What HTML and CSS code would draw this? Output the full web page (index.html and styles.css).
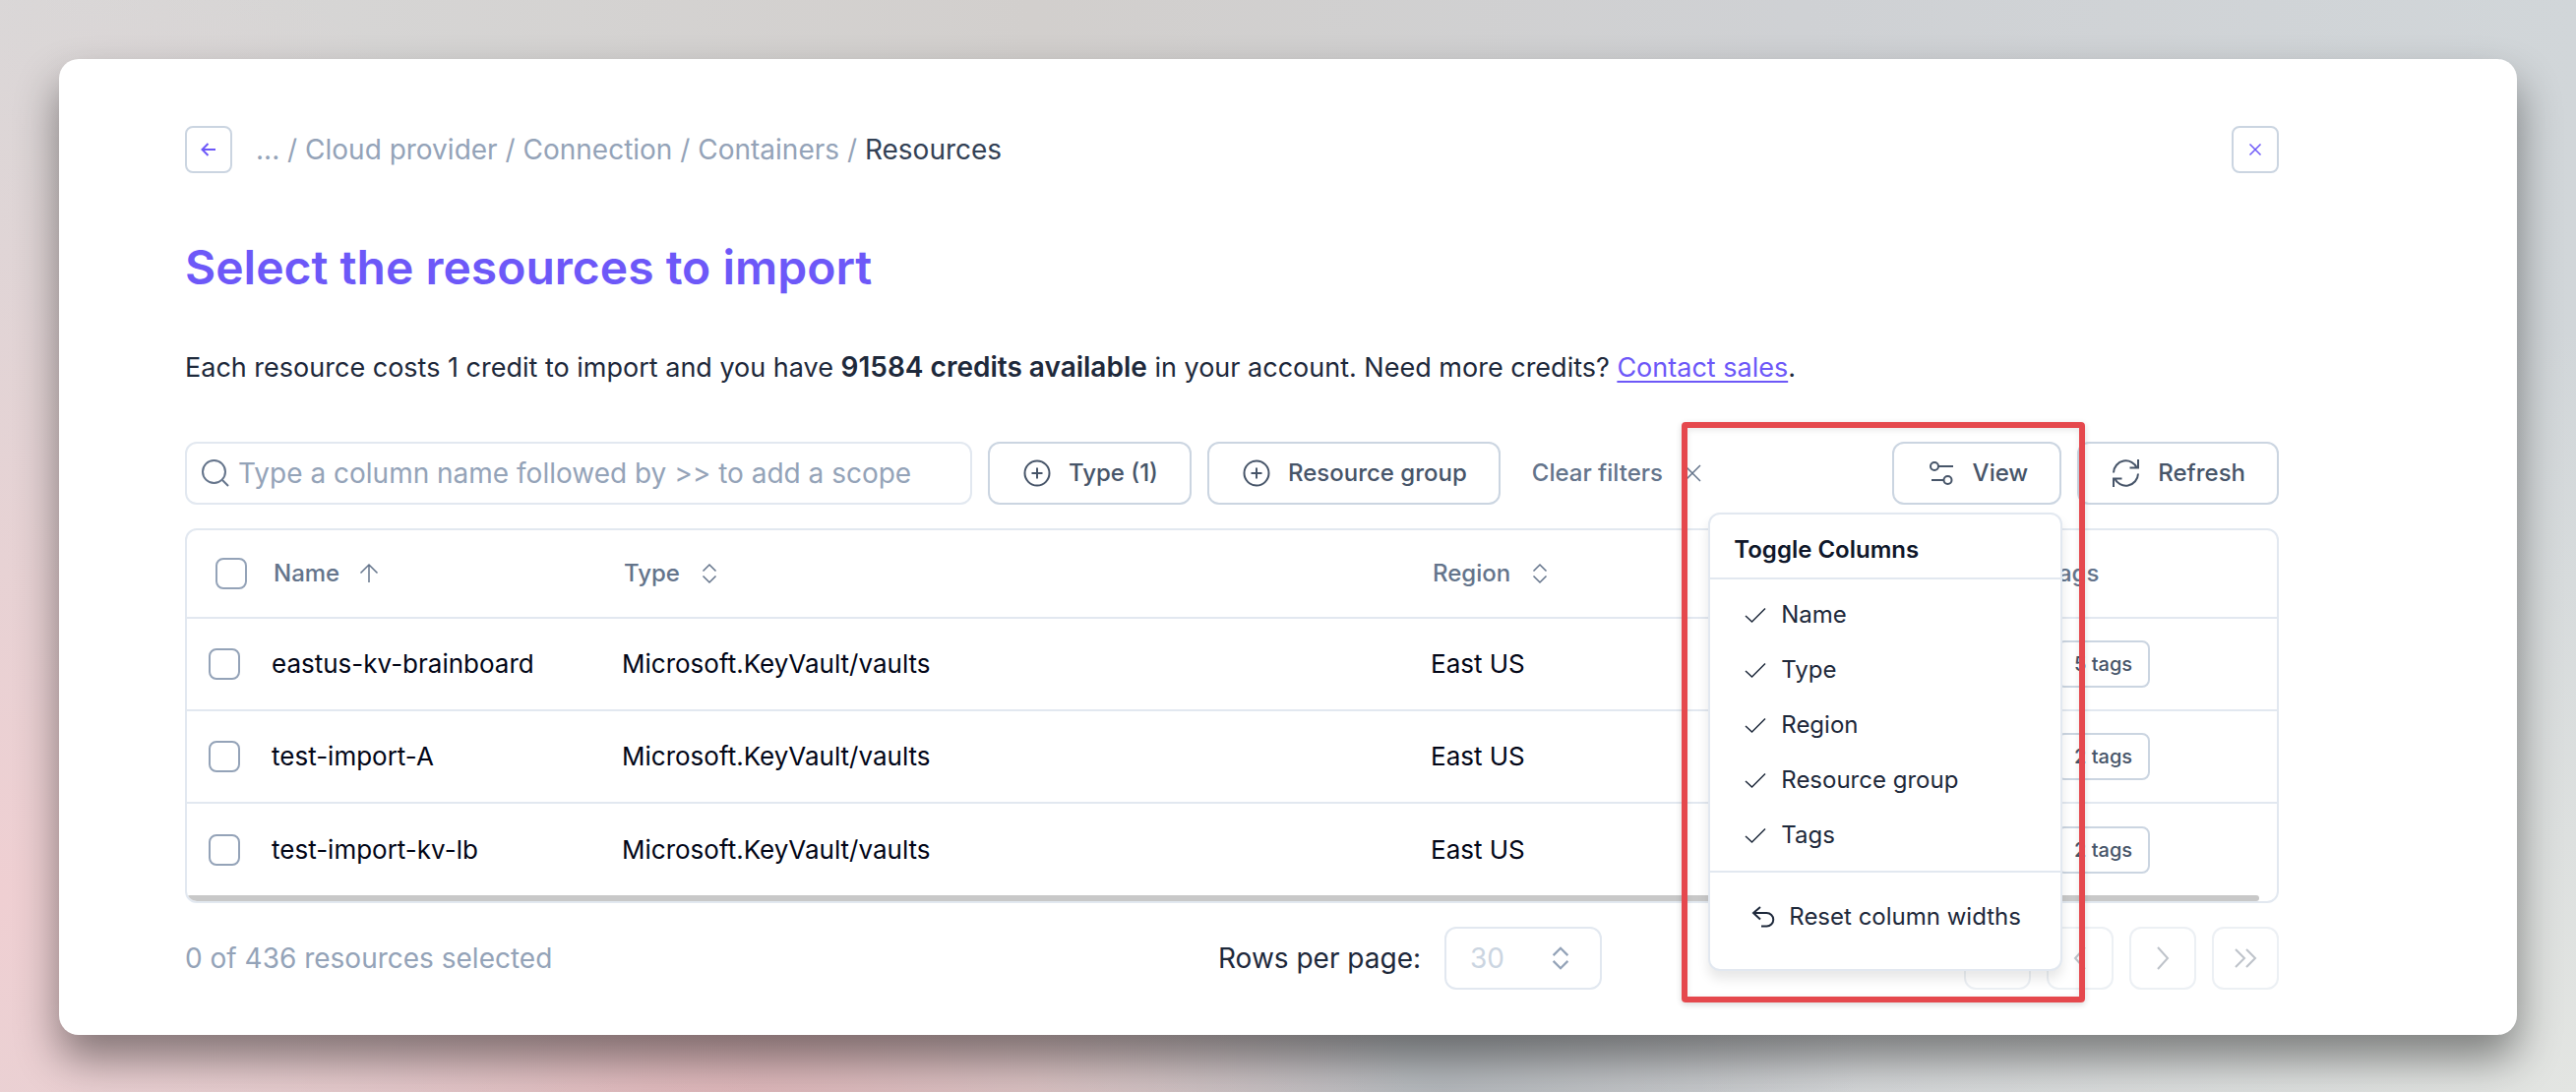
FILE: index.html
```html
<!DOCTYPE html>
<html lang="en">
<head>
<meta charset="utf-8">
<meta name="viewport" content="width=device-width, initial-scale=1">
<title>Select the resources to import</title>
<link rel="stylesheet" href="styles.css">
</head>
<body>
<svg class="sprite" aria-hidden="true">
  <symbol id="i-sort" viewBox="0 0 30 30"><path d="M8.500 12.500 15 6l6.500 6.500M8.500 17.500 15 24l6.500-6.500"/></symbol>
  <symbol id="i-plus-circle" viewBox="0 0 30 30"><circle cx="16" cy="15" r="12.500"/><path d="M16 9.500v11M10.500 15h11"/></symbol>
  <symbol id="i-check" viewBox="0 0 24 24"><path d="m2 13 6.500 6L22 5.500"/></symbol>
</svg>
<main class="panel">
  <header class="topbar">
    <button class="icon-button" type="button" aria-label="Back"><svg class="icon-xs" viewBox="0 0 20 20"><path d="M17 10H4M9.500 4 3.500 10l6 6"/></svg></button>
    <nav class="breadcrumb" aria-label="Breadcrumb">
      <a href="#">...</a> / <a href="#">Cloud provider</a> / <a href="#">Connection</a> / <a href="#">Containers</a> / <span class="current">Resources</span>
    </nav>
    <button class="icon-button" type="button" aria-label="Close"><svg class="icon-xs thin" viewBox="0 0 20 20"><path d="m4.500 4.500 11 11M15.500 4.500l-11 11"/></svg></button>
  </header>
  <h1 class="title">Select the resources to import</h1>
  <p class="intro">Each resource costs 1 credit to import and you have <strong>91584 credits available</strong> in your account. Need more credits? <a href="#">Contact sales</a>.</p>

  <div class="toolbar">
    <label class="search">
      <svg class="icon-md" viewBox="0 0 30 30"><circle cx="13.500" cy="13.500" r="11.500"/><path d="m22 22 6 6"/></svg>
      <input type="text" aria-label="Search resources" placeholder="Type a column name followed by &gt;&gt; to add a scope">
    </label>
    <button class="button" type="button"><svg class="icon-md"><use href="#i-plus-circle"/></svg>Type (1)</button>
    <button class="button" type="button"><svg class="icon-md"><use href="#i-plus-circle"/></svg>Resource group</button>
    <button class="button ghost" type="button">Clear filters<svg class="icon-sm thin" viewBox="0 0 24 24"><path d="m4 4 16 16M20 4 4 20"/></svg></button>
    <div class="view">
      <button class="button" type="button" aria-expanded="true"><svg class="icon-md" viewBox="0 0 30 30"><circle cx="9" cy="8" r="4"/><path d="M13 8h15M6 22h12.500"/><circle cx="22.500" cy="22" r="4"/></svg>View</button>
      <div class="highlight"></div>
      <div class="menu" role="menu">
        <h2 class="menu-title">Toggle Columns</h2>
        <div class="menu-items">
          <button type="button" role="menuitemcheckbox" aria-checked="true"><svg class="icon-sm thin"><use href="#i-check"/></svg>Name</button>
          <button type="button" role="menuitemcheckbox" aria-checked="true"><svg class="icon-sm thin"><use href="#i-check"/></svg>Type</button>
          <button type="button" role="menuitemcheckbox" aria-checked="true"><svg class="icon-sm thin"><use href="#i-check"/></svg>Region</button>
          <button type="button" role="menuitemcheckbox" aria-checked="true"><svg class="icon-sm thin"><use href="#i-check"/></svg>Resource group</button>
          <button type="button" role="menuitemcheckbox" aria-checked="true"><svg class="icon-sm thin"><use href="#i-check"/></svg>Tags</button>
        </div>
        <div class="menu-footer">
          <button type="button" role="menuitem"><svg class="icon-sm" viewBox="0 0 24 24"><path d="M9 2 2 8l7 6.500M2 8h13.500a6.500 6.500 0 0 1 0 13.500H10"/></svg>Reset column widths</button>
        </div>
      </div>
    </div>
    <button class="button" type="button"><svg class="icon-md" viewBox="0 0 30 30"><path d="M3 14.500A12.500 12.500 0 0 1 27 10M28 1v8.500h-8.500M28 15.500A12.500 12.500 0 0 1 4 20M3 29v-8.500h8.500"/></svg>Refresh</button>
  </div>

  <div class="table-box">
    <table class="resources">
      <colgroup><col class="c-check"><col class="c-name"><col class="c-type"><col class="c-region"><col class="c-group"><col></colgroup>
      <thead>
        <tr>
          <th><input type="checkbox" aria-label="Select all"></th>
          <th><span class="head">Name<svg class="icon-md thin" viewBox="0 0 30 30"><path d="M15 24V6M6.500 14.500 15 6l8.500 8.500"/></svg></span></th>
          <th><span class="head">Type<svg class="icon-md thin"><use href="#i-sort"/></svg></span></th>
          <th><span class="head">Region<svg class="icon-md thin"><use href="#i-sort"/></svg></span></th>
          <th></th>
          <th><span class="head">Tags</span></th>
        </tr>
      </thead>
      <tbody>
        <tr><td><input type="checkbox" aria-label="Select eastus-kv-brainboard"></td><td>eastus-kv-brainboard</td><td>Microsoft.KeyVault/vaults</td><td>East US</td><td></td><td><button class="tag" type="button">5 tags</button></td></tr>
        <tr><td><input type="checkbox" aria-label="Select test-import-A"></td><td>test-import-A</td><td>Microsoft.KeyVault/vaults</td><td>East US</td><td></td><td><button class="tag" type="button">2 tags</button></td></tr>
        <tr><td><input type="checkbox" aria-label="Select test-import-kv-lb"></td><td>test-import-kv-lb</td><td>Microsoft.KeyVault/vaults</td><td>East US</td><td></td><td><button class="tag" type="button">2 tags</button></td></tr>
      </tbody>
    </table>
    <div class="scrollbar"></div>
  </div>

  <footer class="footer">
    <span class="selected">0 of 436 resources selected</span>
    <div class="rows">
      <label for="rows">Rows per page:</label>
      <div class="select"><select id="rows" disabled><option>30</option></select><svg class="icon-lg"><use href="#i-sort"/></svg></div>
    </div>
    <div class="pages">
      <button type="button" disabled aria-label="First page"><svg class="icon-md" viewBox="0 0 30 30"><path d="m14 6-9 9 9 9M25 6l-9 9 9 9"/></svg></button>
      <button type="button" disabled aria-label="Previous page"><svg class="icon-md" viewBox="0 0 30 30"><path d="M20 4 10 15l10 11"/></svg></button>
      <button type="button" disabled aria-label="Next page"><svg class="icon-md" viewBox="0 0 30 30"><path d="m10 4 10 11-10 11"/></svg></button>
      <button type="button" disabled aria-label="Last page"><svg class="icon-md" viewBox="0 0 30 30"><path d="m5 6 9 9-9 9M16 6l9 9-9 9"/></svg></button>
    </div>
  </footer>
</main>
</body>
</html>
```
FILE: styles.css
```css
:root {
  --violet: #6d58f8;
  --line: #e2e8f0;
  --line-strong: #cbd5e1;
  --muted: #94a3b8;
  --slate: #64748b;
  --body: #475569;
  --dark: #1e293b;
}

* { box-sizing: border-box; }

body {
  margin: 0;
  padding: 60px;
  min-height: 100vh;
  font-family: Inter, "Liberation Sans", sans-serif;
  font-size: 28px;
  line-height: 40px;
  color: var(--dark);
  background:
    radial-gradient(ellipse 30% 90% at 0% 82%, #efcfd2 0%, #efcfd200 100%),
    radial-gradient(ellipse 28% 60% at 27% 108%, #dfb2b6 0%, #dfb2b600 100%),
    radial-gradient(ellipse 16% 40% at 56% 100%, #b4b8bc 0%, #b4b8bc00 100%),
    radial-gradient(ellipse 36% 70% at 100% 100%, #e3e5e2 0%, #e3e5e200 100%),
    linear-gradient(90deg, #d8d8d8, #d2cfcd 40%, #cfd1d4 70%, #d1d6d9);
}

button, input, select { font: inherit; color: inherit; margin: 0; }
button { background: none; border: 0; padding: 0; }

svg { fill: none; stroke: currentColor; stroke-width: 2; flex: none; }
.thin { stroke-width: 1.5; }
.sprite { position: absolute; width: 0; height: 0; }
.icon-xs { width: 20px; height: 20px; }
.icon-sm { width: 24px; height: 24px; }
.icon-md { width: 30px; height: 30px; }
.icon-lg { width: 34px; height: 34px; }

.panel {
  min-height: 990px;
  padding: 68px 242px 46px 128px;
  border-radius: 20px;
  background: #fff;
  box-shadow: 0 24px 44px #00000070;
}

.topbar { display: flex; align-items: center; gap: 24px; }
.icon-button {
  display: grid;
  place-items: center;
  width: 48px;
  height: 48px;
  border: 2px solid var(--line-strong);
  border-radius: 8px;
  color: var(--violet);
}
.breadcrumb { flex: 1; color: var(--muted); }
.breadcrumb a { color: inherit; text-decoration: none; }
.current { color: #334155; }

.title {
  margin: 64px 0 0;
  font-size: 48px;
  line-height: 64px;
  font-weight: 600;
  color: var(--violet);
}
.intro { margin: 49px 0 0; font-size: 27px; }
.intro strong { font-size: 28px; font-weight: 600; }
.intro a { color: var(--violet); text-underline-offset: 4px; }

.toolbar { display: flex; gap: 16px; margin-top: 55px; }
.search {
  display: flex;
  align-items: center;
  gap: 8px;
  width: 800px;
  height: 64px;
  padding: 0 14px;
  border: 2px solid var(--line);
  border-radius: 12px;
  color: var(--slate);
}
.search input { flex: 1; min-width: 0; padding: 0; border: 0; outline: 0; background: none; }
.search input::placeholder { color: var(--muted); opacity: 1; }
.button {
  display: flex;
  align-items: center;
  gap: 18px;
  height: 64px;
  padding: 0 32px;
  border: 2px solid var(--line-strong);
  border-radius: 12px;
  font-size: 24px;
  font-weight: 500;
  white-space: nowrap;
  color: var(--body);
}
.ghost { padding: 0 14px; border-color: transparent; color: var(--slate); }

.view { position: relative; margin-left: auto; }
.highlight {
  position: absolute;
  z-index: 3;
  top: -20px;
  right: -24px;
  width: 410px;
  height: 590px;
  border: 6px solid #e5484d;
  border-radius: 4px;
  box-shadow: 0 2px 6px #00000028, inset 0 2px 6px #00000018;
  pointer-events: none;
}
.menu {
  position: absolute;
  z-index: 2;
  top: 72px;
  right: -1px;
  width: 360px;
  border: 2px solid var(--line);
  border-radius: 12px;
  background: #fff;
  box-shadow: 0 8px 12px #00000018;
  font-size: 24px;
  line-height: 32px;
}
.menu-title {
  margin: 0;
  padding: 20px 24px 12px;
  border-bottom: 2px solid var(--line);
  font-size: 24px;
  font-weight: 600;
  color: #0f172a;
}
.menu-items { padding: 8px 0; border-bottom: 2px solid var(--line); }
.menu button { display: flex; align-items: center; gap: 14px; width: 100%; height: 56px; padding: 0 34px; white-space: nowrap; }
.menu-footer { padding: 17px 0 25px; }
.menu-footer button { padding: 0 0 0 42px; }

.table-box {
  position: relative;
  margin-top: 24px;
  padding-bottom: 6px;
  border: 2px solid var(--line);
  border-radius: 12px;
  overflow: hidden;
}
.resources { width: 100%; table-layout: fixed; border-collapse: collapse; font-size: 26px; color: #020617; }
.c-check { width: 86px; }
.c-name { width: 356px; }
.c-type { width: 822px; }
.c-region { width: 366px; }
.c-group { width: 256px; }
.resources th { height: 89px; padding: 0 2px; border-bottom: 2px solid var(--line); font-size: 24px; font-weight: 500; text-align: left; color: var(--slate); }
.resources td { height: 94px; padding: 0; border-bottom: 2px solid var(--line); }
.resources tr:last-child td { border-bottom: 0; }
.resources th:first-child { padding-left: 29px; }
.resources td:first-child { padding-left: 22px; }
.resources td:last-child { padding-left: 14px; }
.resources input {
  display: block;
  appearance: none;
  width: 32px;
  height: 32px;
  border: 2px solid var(--muted);
  border-radius: 8px;
}
.head { display: flex; align-items: center; gap: 15px; }
.tag {
  display: block;
  height: 48px;
  padding: 0 16px;
  border: 2px solid var(--line-strong);
  border-radius: 8px;
  font-size: 20px;
  font-weight: 500;
  color: var(--body);
}
.scrollbar { position: absolute; left: 0; right: 18px; bottom: 0; height: 6px; border-radius: 3px; background: #c8c8c8; }

.footer { display: grid; grid-template-columns: 1050px 1fr auto; align-items: center; margin-top: 24px; }
.selected { color: var(--muted); }
.rows { display: flex; align-items: center; gap: 24px; }
.select { display: flex; align-items: center; position: relative; color: var(--muted); }
.select select {
  appearance: none;
  width: 160px;
  height: 64px;
  padding: 0 24px;
  border: 2px solid var(--line);
  border-radius: 12px;
  background: #fff;
  color: var(--line-strong);
  opacity: 1;
}
.select svg { position: absolute; right: 25px; }
.pages { display: flex; gap: 16px; }
.pages button {
  display: grid;
  place-items: center;
  width: 68px;
  height: 64px;
  border: 2px solid var(--line-strong);
  border-radius: 12px;
  color: var(--body);
  opacity: 0.35;
}
```
